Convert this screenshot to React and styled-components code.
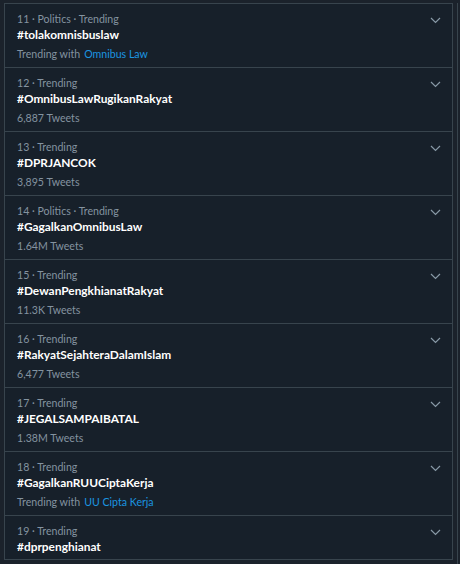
import React from 'react';
import styled, { createGlobalStyle } from 'styled-components';

const GlobalStyle = createGlobalStyle`
  html, body {
    margin: 0;
    padding: 0;
    background: #1b222b;
  }
  body {
    font-family: Lato, "Noto Sans", sans-serif;
  }
`;

const Page = styled.div`
  width: 460px;
  height: 564px;
  overflow: hidden;
  padding: 3px 0 0 4px;
  box-sizing: border-box;
  display: flex;
`;

const Panel = styled.div`
  width: 449px;
  background: #17202a;
  border-top: 1px solid #38444d;
  border-left: 1px solid #38444d;
  border-right: 1px solid #38444d;
  box-sizing: border-box;
  flex-shrink: 0;
  align-self: flex-start;
`;

const Gutter = styled.div`
  width: 4px;
  border-right: 1px solid #38444d;
  flex-shrink: 0;
`;

const Row = styled.div`
  position: relative;
  padding: 7px 12px 0 12px;
  height: ${p => (p.$short ? 44 : 64)}px;
  border-bottom: 1px solid #38444d;
  box-sizing: border-box;
`;

const Meta = styled.div`
  font-size: 10.6px;
  line-height: 16px;
  color: #8493a0;
  white-space: nowrap;
`;

const Tag = styled.div`
  font-size: 11.9px;
  font-weight: 700;
  line-height: 16px;
  color: #ffffff;
  white-space: nowrap;
`;

const Sub = styled.div`
  font-size: 10.6px;
  line-height: 16px;
  color: #8493a0;
  margin-top: 3px;
  white-space: nowrap;
`;

const Link = styled.span`
  color: #1b95e0;
  margin-left: 4px;
`;

const Caret = styled.svg`
  position: absolute;
  top: 13px;
  right: 11px;
  width: 11px;
  height: 7px;
`;

const trends = [
  { n: 11, cat: 'Politics · Trending', tag: '#tolakomnisbuslaw', with: 'Omnibus Law' },
  { n: 12, cat: 'Trending', tag: '#OmnibusLawRugikanRakyat', count: '6,887 Tweets' },
  { n: 13, cat: 'Trending', tag: '#DPRJANCOK', count: '3,895 Tweets' },
  { n: 14, cat: 'Politics · Trending', tag: '#GagalkanOmnibusLaw', count: '1.64M Tweets' },
  { n: 15, cat: 'Trending', tag: '#DewanPengkhianatRakyat', count: '11.3K Tweets' },
  { n: 16, cat: 'Trending', tag: '#RakyatSejahteraDalamIslam', count: '6,477 Tweets' },
  { n: 17, cat: 'Trending', tag: '#JEGALSAMPAIBATAL', count: '1.38M Tweets' },
  { n: 18, cat: 'Trending', tag: '#GagalkanRUUCiptaKerja', with: 'UU Cipta Kerja' },
  { n: 19, cat: 'Trending', tag: '#dprpenghianat' },
];

const Trend = ({ t }) => (
  <Row $short={!t.count && !t.with}>
    <Meta>{t.n} · {t.cat}</Meta>
    <Tag>{t.tag}</Tag>
    {t.count && <Sub>{t.count}</Sub>}
    {t.with && (
      <Sub>
        Trending with<Link>{t.with}</Link>
      </Sub>
    )}
    <Caret viewBox="0 0 11 7">
      <polyline points="1,1 5.5,5.5 10,1" fill="none" stroke="#8899a6" strokeWidth="1.2" />
    </Caret>
  </Row>
);

export default function App() {
  return (
    <>
      <GlobalStyle />
      <Page>
        <Panel>
          {trends.map(t => (
            <Trend key={t.n} t={t} />
          ))}
        </Panel>
        <Gutter />
      </Page>
    </>
  );
}
